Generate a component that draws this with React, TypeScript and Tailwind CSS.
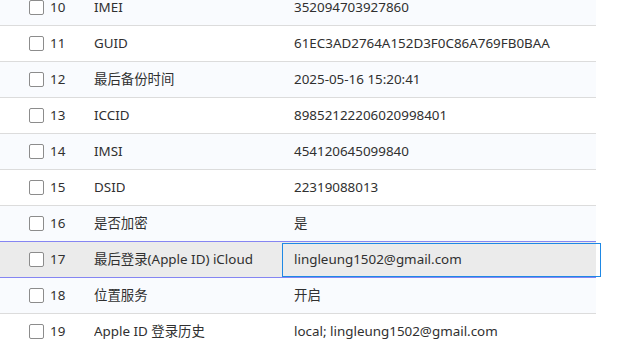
const rows = [
  { id: 10, name: "IMEI", value: "352094703927860" },
  { id: 11, name: "GUID", value: "61EC3AD2764A152D3F0C86A769FB0BAA" },
  { id: 12, name: "最后备份时间", value: "2025-05-16 15:20:41" },
  { id: 13, name: "ICCID", value: "89852122206020998401" },
  { id: 14, name: "IMSI", value: "454120645099840" },
  { id: 15, name: "DSID", value: "22319088013" },
  { id: 16, name: "是否加密", value: "是" },
  { id: 17, name: "最后登录(Apple ID) iCloud", value: "lingleung1502@gmail.com" },
  { id: 18, name: "位置服务", value: "开启" },
  { id: 19, name: "Apple ID 登录历史", value: "local; lingleung1502@gmail.com" },
];

const selectedId = 17;

export default function App() {
  return (
    <div
      className="h-[345px] w-[634px] overflow-hidden bg-white text-[13.4px] text-[#303030]"
      style={{ fontFamily: '"Noto Sans", "Noto Sans CJK SC", sans-serif' }}
    >
      <div className="-mt-[10px] w-[596px]">
        {rows.map((row, i) => {
          const selected = row.id === selectedId;
          const nextSelected = rows[i + 1]?.id === selectedId;
          return (
            <div
              key={row.id}
              className={
                "flex h-[36px] items-center border-b " +
                (selected
                  ? "border-[#8585f2] bg-[#ebebeb]"
                  : nextSelected
                  ? "border-[#8585f2] " + (i % 2 === 0 ? "bg-[#f9fbfe]" : "bg-white")
                  : "border-[#dcdcdc] " + (i % 2 === 0 ? "bg-[#f9fbfe]" : "bg-white"))
              }
            >
              <div className="flex w-[282px] items-center pl-[29px]">
                <span className="h-[15px] w-[15px] shrink-0 rounded-[2px] border-[1.5px] border-[#8c8c8c] bg-white" />
                <span className="ml-[6px] w-[44px]">{row.id}</span>
                <span className="truncate">{row.name}</span>
              </div>
              <div className="relative flex h-full flex-1 items-center pl-[12px]">
                {selected && (
                  <span className="absolute -right-[5px] top-[1px] bottom-[0px] left-0 border border-[#1e88e5]" />
                )}
                <span>{row.value}</span>
              </div>
            </div>
          );
        })}
      </div>
    </div>
  );
}
